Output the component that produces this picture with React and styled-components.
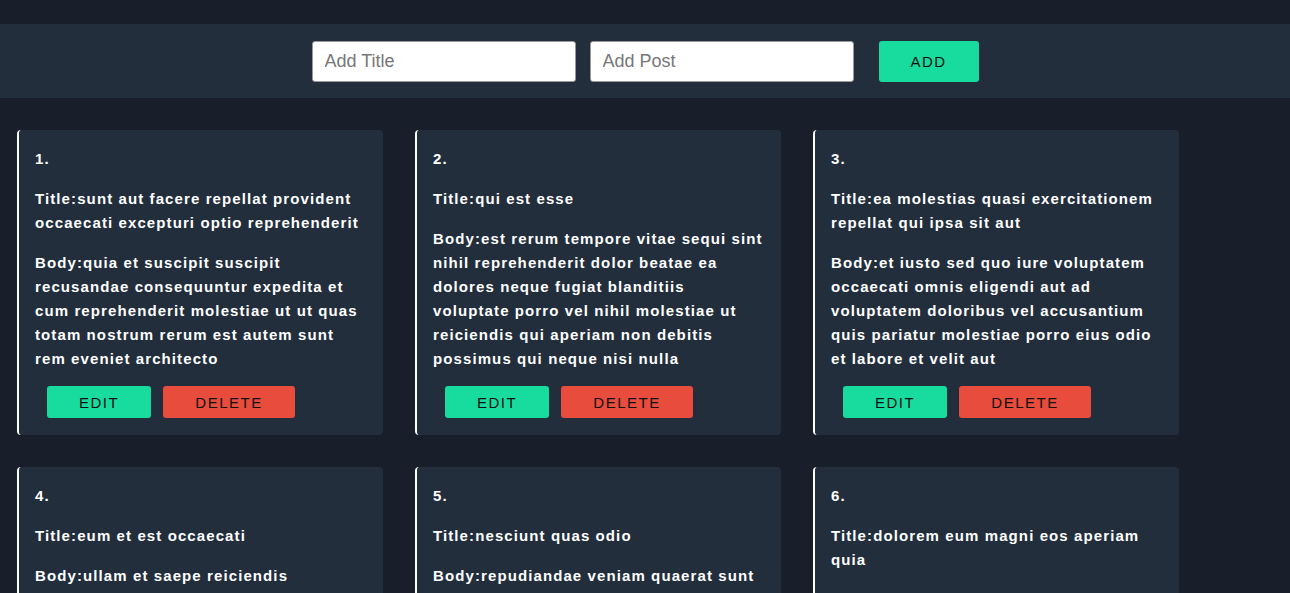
import React, { useState } from 'react';
import styled, { createGlobalStyle } from 'styled-components';

const GlobalStyle = createGlobalStyle`
  html, body {
    margin: 0;
    padding: 0;
    background: #191f2a;
  }
  body {
    font-family: "Liberation Sans", Arial, sans-serif;
  }
`

const Page = styled.div`
  padding-top: 24px;
  min-height: 100vh;
  box-sizing: border-box;
  background: #191f2a;
`

const Header = styled.div`
  display: flex;
  justify-content: center;
  align-items: center;
  height: 74px;
  background: #222e3c;
  gap: 14px;
`

const Input = styled.input`
  width: 264px;
  height: 41px;
  box-sizing: border-box;
  border: 1px solid #999;
  border-radius: 3px;
  padding: 0 12px;
  font-family: "Liberation Sans", Arial, sans-serif;
  font-size: 18px;
  color: #222;
  background: #fff;
  &::placeholder {
    color: #777;
  }
`

const AddButton = styled.button`
  margin-left: 11px;
  width: 100px;
  height: 41px;
  border: none;
  border-radius: 3px;
  background: #17dc9d;
  color: #111;
  font-family: "Liberation Sans", Arial, sans-serif;
  font-size: 15px;
  letter-spacing: 1.5px;
  cursor: pointer;
`

const Grid = styled.div`
  display: grid;
  grid-template-columns: repeat(3, 366px);
  column-gap: 32px;
  row-gap: 32px;
  padding: 32px 17px;
`

const Card = styled.div`
  display: flex;
  flex-direction: column;
  background: #222e3c;
  border-left: 2px solid #fff;
  border-radius: 4px;
  padding: 17px 16px 17px 16px;
  color: #fff;
`

const Line = styled.p`
  margin: 0 0 16px;
  font-family: "Liberation Sans", Arial, sans-serif;
  font-weight: bold;
  font-size: 15px;
  line-height: 24px;
  letter-spacing: 1.1px;
  &:last-of-type {
    margin-bottom: 15px;
  }
`

const Actions = styled.div`
  display: flex;
  gap: 12px;
  padding-left: 12px;
  margin-top: auto;
`

const ActionButton = styled.button`
  width: ${p => p.$w}px;
  height: 32px;
  border: none;
  border-radius: 3px;
  background: ${p => p.$bg};
  color: #111;
  font-family: "Liberation Sans", Arial, sans-serif;
  font-size: 15px;
  letter-spacing: 1.5px;
  cursor: pointer;
`

const posts = [
  {
    id: 1,
    title: 'sunt aut facere repellat provident occaecati excepturi optio reprehenderit',
    body: 'quia et suscipit suscipit recusandae consequuntur expedita et cum reprehenderit molestiae ut ut quas totam nostrum rerum est autem sunt rem eveniet architecto',
  },
  {
    id: 2,
    title: 'qui est esse',
    body: 'est rerum tempore vitae sequi sint nihil reprehenderit dolor beatae ea dolores neque fugiat blanditiis voluptate porro vel nihil molestiae ut reiciendis qui aperiam non debitis possimus qui neque nisi nulla',
  },
  {
    id: 3,
    title: 'ea molestias quasi exercitationem repellat qui ipsa sit aut',
    body: 'et iusto sed quo iure voluptatem occaecati omnis eligendi aut ad voluptatem doloribus vel accusantium quis pariatur molestiae porro eius odio et labore et velit aut',
  },
  {
    id: 4,
    title: 'eum et est occaecati',
    body: 'ullam et saepe reiciendis voluptatem adipisci sit amet autem assumenda provident rerum culpa quis hic commodi nesciunt rem tenetur doloremque ipsam iure quis sunt voluptatem rerum illo velit',
  },
  {
    id: 5,
    title: 'nesciunt quas odio',
    body: 'repudiandae veniam quaerat sunt sed alias aut fugiat sit autem sed est voluptatem omnis possimus esse voluptatibus quis est aut tenetur dolor neque',
  },
  {
    id: 6,
    title: 'dolorem eum magni eos aperiam quia',
    body: 'ut aspernatur corporis harum nihil quis provident sequi mollitia nobis aliquid molestiae perspiciatis et ea nemo ab reprehenderit accusantium quas voluptate dolores velit et doloremque molestiae',
  },
]

const App = () => {
  const [items] = useState(posts)
  return (
    <Page>
      <GlobalStyle />
      <Header>
        <Input placeholder="Add Title" />
        <Input placeholder="Add Post" />
        <AddButton>ADD</AddButton>
      </Header>
      <Grid>
        {items.map(post => (
          <Card key={post.id}>
            <Line>{post.id}.</Line>
            <Line>Title:{post.title}</Line>
            <Line>Body:{post.body}</Line>
            <Actions>
              <ActionButton $w={104} $bg="#17dc9d">EDIT</ActionButton>
              <ActionButton $w={132} $bg="#e84c3d">DELETE</ActionButton>
            </Actions>
          </Card>
        ))}
      </Grid>
    </Page>
  )
}

export default App
